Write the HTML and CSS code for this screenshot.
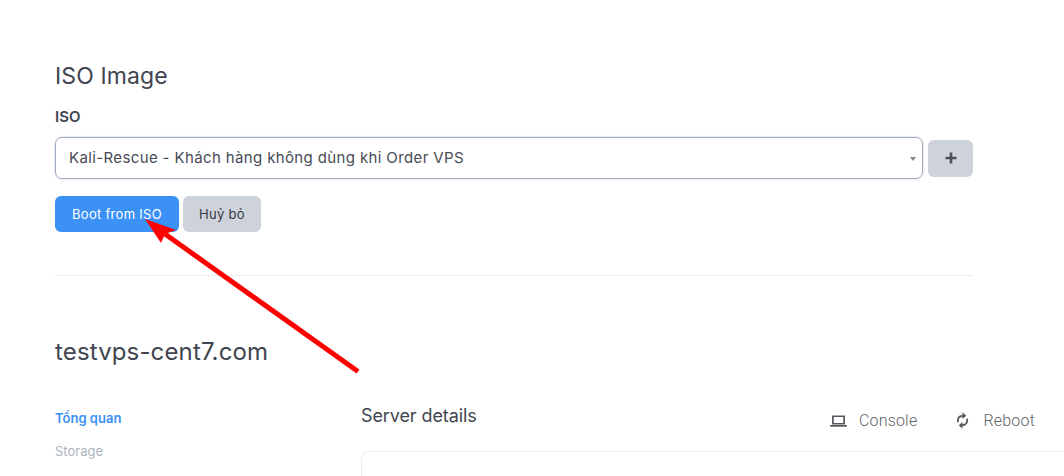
FILE: index.html
```html
<!DOCTYPE html>
<html lang="en">

<head>
    <meta charset="UTF-8">
    <title>ISO Image</title>
    <link rel="stylesheet" href="styles.css">
</head>

<body>
    <section class="iso">
        <h2 class="iso-title">ISO Image</h2>
        <div class="iso-label">ISO</div>
        <div class="iso-row">
            <div class="select">
                <span>Kali-Rescue - Khách hàng không dùng khi Order VPS</span>
                <i class="caret"></i>
            </div>
            <button class="btn btn-add">
                <svg width="12" height="12" viewBox="0 0 12 12"><path d="M6 .5v11M.5 6h11" stroke="#4a4f58" stroke-width="2.6" fill="none"/></svg>
            </button>
        </div>
        <div class="iso-actions">
            <button class="btn btn-primary">Boot from ISO</button>
            <button class="btn btn-grey">Huỷ bỏ</button>
        </div>
    </section>

    <hr class="divider">

    <h1 class="server-name">testvps-cent7.com</h1>

    <div class="server">
        <nav class="side">
            <a class="active">Tổng quan</a>
            <a>Storage</a>
        </nav>
        <div class="details">
            <div class="details-head">
                <h3>Server details</h3>
                <div class="details-tools">
                    <a>
                        <svg width="17" height="12" viewBox="0 0 17 12"><path d="M2 .5h13v9H2zM3.700 2.100v5.800h9.600V2.100zM0 10h17v.8q0 1-1 1H1q-1 0-1-1z" fill="#55585e" fill-rule="evenodd"/></svg>
                        Console
                    </a>
                    <a>
                        <svg class="reboot" width="13" height="17" viewBox="0 0 13 17"><path d="M6.500 2.900V.3l3.700 3.400-3.700 3.400V4.700a3.800 3.800 0 0 0-3.600 5l-1.500 1.100a5.600 5.600 0 0 1 5.100-7.900zM6.500 14.100v2.600l-3.700-3.400 3.700-3.400v2.400a3.800 3.800 0 0 0 3.600-5l1.500-1.100a5.600 5.600 0 0 1-5.100 7.900z" fill="#55585e"/></svg>
                        Reboot
                    </a>
                </div>
            </div>
            <div class="card"></div>
        </div>
    </div>

    <svg class="arrow" width="1064" height="476" viewBox="0 0 1064 476">
        <path d="M358 371.500 165 234" stroke="#f00" stroke-width="5" fill="none"/>
        <path d="M145 219 176 230 165 234 161 243z" fill="#f00"/>
    </svg>
</body>

</html>
```

FILE: styles.css
```css
html,
body {
    height: 476px;
    overflow: hidden;
}

body {
    margin: 0;
    padding: 63px 0 0 55px;
    box-sizing: border-box;
    position: relative;
    background-color: white;
    font-family: "Inter", "Liberation Sans", sans-serif;
    color: #41454f;
}

.iso {
    width: 918px;
}

.iso-title {
    margin: 0;
    font-size: 23px;
    line-height: 27px;
    font-weight: 400;
    letter-spacing: 0.1px;
}

.iso-label {
    margin-top: 17px;
    font-size: 15px;
    line-height: 20px;
    font-weight: 600;
}

.iso-row {
    display: flex;
    align-items: center;
    gap: 5px;
    margin-top: 10px;
}

.select {
    flex: 1;
    height: 42px;
    box-sizing: border-box;
    display: flex;
    align-items: center;
    justify-content: space-between;
    padding: 0 6px 2px 13px;
    border: 1px solid #a3afc0;
    border-radius: 7px;
    box-shadow: 0 0 2px rgba(90, 110, 140, 0.45);
    font-size: 15px;
    letter-spacing: 0.37px;
    color: #474b55;
}

.caret {
    border-top: 4px solid #888;
    border-left: 3.5px solid transparent;
    border-right: 3.5px solid transparent;
    margin-top: 4px;
}

.btn {
    border: 0;
    border-radius: 6px;
    font-family: inherit;
    font-size: 13px;
    letter-spacing: 0.3px;
    display: flex;
    align-items: center;
    justify-content: center;
    padding: 0 0 1px;
}

.btn-add {
    width: 45px;
    height: 37px;
    background-color: #ced3db;
}

.iso-actions {
    display: flex;
    gap: 4px;
    margin-top: 17px;
}

.btn-primary {
    width: 124px;
    height: 36px;
    background-color: #3b91f5;
    color: white;
}

.btn-grey {
    width: 78px;
    height: 36px;
    background-color: #ced3db;
    color: #363a42;
}

.divider {
    width: 918px;
    margin: 43px 0 0;
    border: 0;
    border-top: 1px solid #eaecef;
}

.server-name {
    margin: 61px 0 0;
    font-size: 24px;
    line-height: 30px;
    font-weight: 400;
    letter-spacing: 0.14px;
}

.server {
    display: flex;
    margin-top: 37px;
}

.side {
    width: 306px;
    flex: none;
    padding-top: 6px;
}

.side a {
    display: block;
    font-size: 13px;
    line-height: 16px;
    margin-bottom: 17px;
    color: #aeb3bf;
}

.side a.active {
    color: #3b91f5;
    font-weight: 600;
}

.details {
    flex: 1;
}

.details-head {
    display: flex;
    justify-content: space-between;
    align-items: flex-start;
    padding-right: 29px;
}

.details-head h3 {
    margin: 0;
    font-size: 18px;
    line-height: 24px;
    font-weight: 400;
    letter-spacing: -0.1px;
}

.details-tools {
    display: flex;
    gap: 39px;
    margin-top: 7px;
}

.details-tools a {
    display: flex;
    align-items: center;
    gap: 12px;
    font-family: "Roboto", sans-serif;
    font-size: 16px;
    font-weight: 300;
    letter-spacing: 0.2px;
    color: #5f6368;
}

.details-tools .reboot {
    margin-right: 2px;
}

.card {
    height: 24px;
    margin-top: 21px;
    margin-right: -20px;
    border: 1px solid #eaecef;
    border-bottom: 0;
    border-radius: 8px 8px 0 0;
}

.arrow {
    position: absolute;
    top: 0;
    left: 0;
}
```
